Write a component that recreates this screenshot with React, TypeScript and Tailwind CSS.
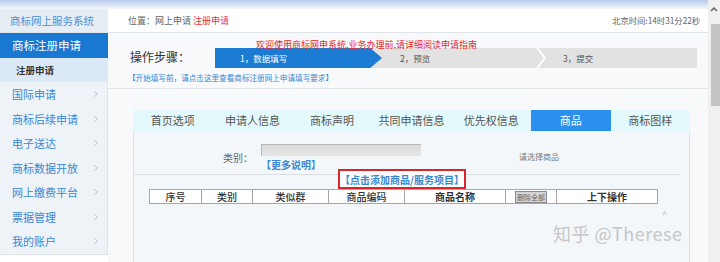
import React from 'react';
import { ChevronRight } from 'lucide-react';

const menuItems = ['国际申请', '商标后续申请', '电子送达', '商标数据开放', '网上缴费平台', '票据管理', '我的账户'];
const tabs = ['首页选项', '申请人信息', '商标声明', '共同申请信息', '优先权信息', '商品', '商标图样'];

const Sidebar: React.FC = () => (
  <div className="w-[108px] flex flex-col">
    <div className="h-[24px] bg-[#e6edf5] flex items-center pl-[10px] text-[10.5px] text-[#4a8fd4] border-b border-[#dfe5ec]">
      商标网上服务系统
    </div>
    <div className="h-[25px] bg-[#1878d2] flex items-center pl-[12px] text-[11.5px] text-white">
      商标注册申请
    </div>
    <div className="h-[24px] bg-[#dbe8f5] flex items-center pl-[16px] text-[9.5px] font-bold text-[#333]">
      注册申请
    </div>
    <div className="bg-[#eef3f8] border-r border-b border-[#dde3ea]">
      {menuItems.map((item) => (
        <div key={item} className="h-[24.5px] flex items-center justify-between pl-[12px] pr-[6px] text-[11px] text-[#3a88d4]">
          <span>{item}</span>
          <ChevronRight className="w-[10px] h-[10px] text-[#a9b3be]" strokeWidth={2} />
        </div>
      ))}
    </div>
  </div>
);

const StepBar: React.FC = () => (
  <div className="flex flex-col">
    <div className="h-[11px] pl-[41px] text-[9px] leading-[11px] text-[#e4262a] relative z-10">
      欢迎使用商标网申系统,业务办理前,请详细阅读申请指南
    </div>
    <div className="h-[20px] -mt-[2px] bg-[#e2e2e2] flex items-center text-[8.5px] w-[482px]">
      <div className="h-full w-[167px] bg-[#1c7bd3] text-white flex items-center pl-[25px] [clip-path:polygon(0_0,93%_0,100%_50%,93%_100%,0_100%)]">
        1，数据填写
      </div>
      <div className="w-[153px] pl-[18px] text-[#555]">2，预览</div>
      <svg width="12" height="20" viewBox="0 0 12 20" className="shrink-0">
        <polyline points="2,0 10,10 2,20" fill="none" stroke="#ffffff" strokeWidth="2" />
      </svg>
      <div className="pl-[16px] text-[#555]">3，提交</div>
    </div>
  </div>
);

const GoodsTable: React.FC = () => (
  <div className="ml-[15px] w-[509px] h-[15px] flex border border-[#a7a7a7] bg-white text-[10px] text-[#333]">
    <div className="w-[52px] flex items-center justify-center border-r border-[#a7a7a7] font-medium">序号</div>
    <div className="w-[51px] flex items-center justify-center border-r border-[#a7a7a7] font-medium">类别</div>
    <div className="w-[76px] flex items-center justify-center border-r border-[#a7a7a7] font-medium">类似群</div>
    <div className="w-[76px] flex items-center justify-center border-r border-[#a7a7a7] font-medium">商品编码</div>
    <div className="w-[101px] flex items-center justify-center border-r border-[#a7a7a7] font-bold">商品名称</div>
    <div className="w-[51px] flex items-center justify-center border-r border-[#a7a7a7]">
      <div className="w-[32px] h-[12px] bg-[#d4d4d4] border border-[#8a8a8a] text-[7px] leading-[10px] text-[#666] text-center">删除全部</div>
    </div>
    <div className="flex-1 flex items-center justify-center font-bold">上下操作</div>
  </div>
);

export default function App() {
  return (
    <div className="relative w-[720px] h-[262px] overflow-hidden bg-white flex font-['Noto_Sans_CJK_SC','Microsoft_YaHei',sans-serif]">
      <div className="flex-1 flex flex-col">
        <div className="h-[9px] bg-gradient-to-b from-[#b9cbea] to-[#f4f7fc]" />
        <div className="flex flex-1">
          <Sidebar />
          <div className="flex-1 flex flex-col bg-[#f7f9fb]">
            <div className="h-[24px] bg-white border-b border-[#dfe4ea] flex items-center justify-between pl-[20px] pr-[8px] text-[9px] text-[#666]">
              <div>
                位置：网上申请 <span className="text-[#e8353a]">注册申请</span>
              </div>
              <div className="text-[8.3px]">北京时间:14时31分22秒</div>
            </div>
            <div className="flex items-end pt-[6px]">
              <div className="w-[107px] pl-[22px] pb-[2px] text-[12px] text-[#333]">操作步骤：</div>
              <StepBar />
            </div>
            <div className="h-[21px] border-b border-[#e1e5ea] flex items-center pl-[20px] text-[7.6px] text-[#3a88d4]">
              【开始填写前，请点击这里查看商标注册网上申请填写要求】
            </div>
            <div className="ml-[25px] mr-[18px] mt-[21px] flex flex-col flex-1">
              <div className="h-[21px] bg-[#e3f9fc] flex">
                {tabs.map((tab) => (
                  <div
                    key={tab}
                    className={
                      tab === '商品'
                        ? 'w-[79.6px] flex items-center justify-center text-[11px] bg-[#2b8ff0] text-white'
                        : 'w-[79.6px] flex items-center justify-center text-[11px] text-[#555]'
                    }
                  >
                    {tab}
                  </div>
                ))}
              </div>
              <div className="flex-1 border-l border-r border-[#dfe3e8] bg-[#f4f7fa] flex flex-col">
                <div className="flex pt-[13px] h-[43px]">
                  <div className="w-[127px] pl-[89px] pt-[6px] text-[10px] text-[#666]">类别：</div>
                  <div className="flex flex-col">
                    <div className="w-[160px] h-[12px] bg-gradient-to-b from-[#d9d9d9] to-[#e6e6e6] border-t border-l border-[#b8b8b8]" />
                    <div className="text-[10px] font-bold text-[#3a88d4] leading-[14px] mt-[2px]">【更多说明】</div>
                  </div>
                  <div className="pl-[98px] pt-[7px] text-[8px] text-[#777]">请选择商品</div>
                </div>
                <div className="mr-[10px] border-t border-[#dcdfe3]" />
                <div className="ml-[204px] -mt-[6px] relative w-[128px] h-[20px] border-2 border-[#d9262b] bg-[#fbfcfd] flex items-center justify-center text-[10px] font-bold text-[#3a88d4]">
                  【点击添加商品/服务项目】
                </div>
                <GoodsTable />
              </div>
            </div>
          </div>
        </div>
      </div>
      <div className="w-[12px] bg-[#f0f0f0] flex flex-col items-center">
        <svg width="8" height="6" viewBox="0 0 8 6" className="mt-[6px]">
          <polyline points="1,5 4,2 7,5" fill="none" stroke="#606060" strokeWidth="1.5" />
        </svg>
        <div className="mt-[12px] w-[9px] h-[82px] bg-[#c4c4c4] ml-[2px]" />
      </div>
      <div className="absolute left-[662px] top-[208px] text-[9px] text-[#b8b8b8]">^</div>
      <div className="absolute left-[553px] top-[222px] text-[18px] leading-[22px] text-[#c6c6c6] tracking-[0.5px]">
        知乎 @Therese
      </div>
    </div>
  );
}
